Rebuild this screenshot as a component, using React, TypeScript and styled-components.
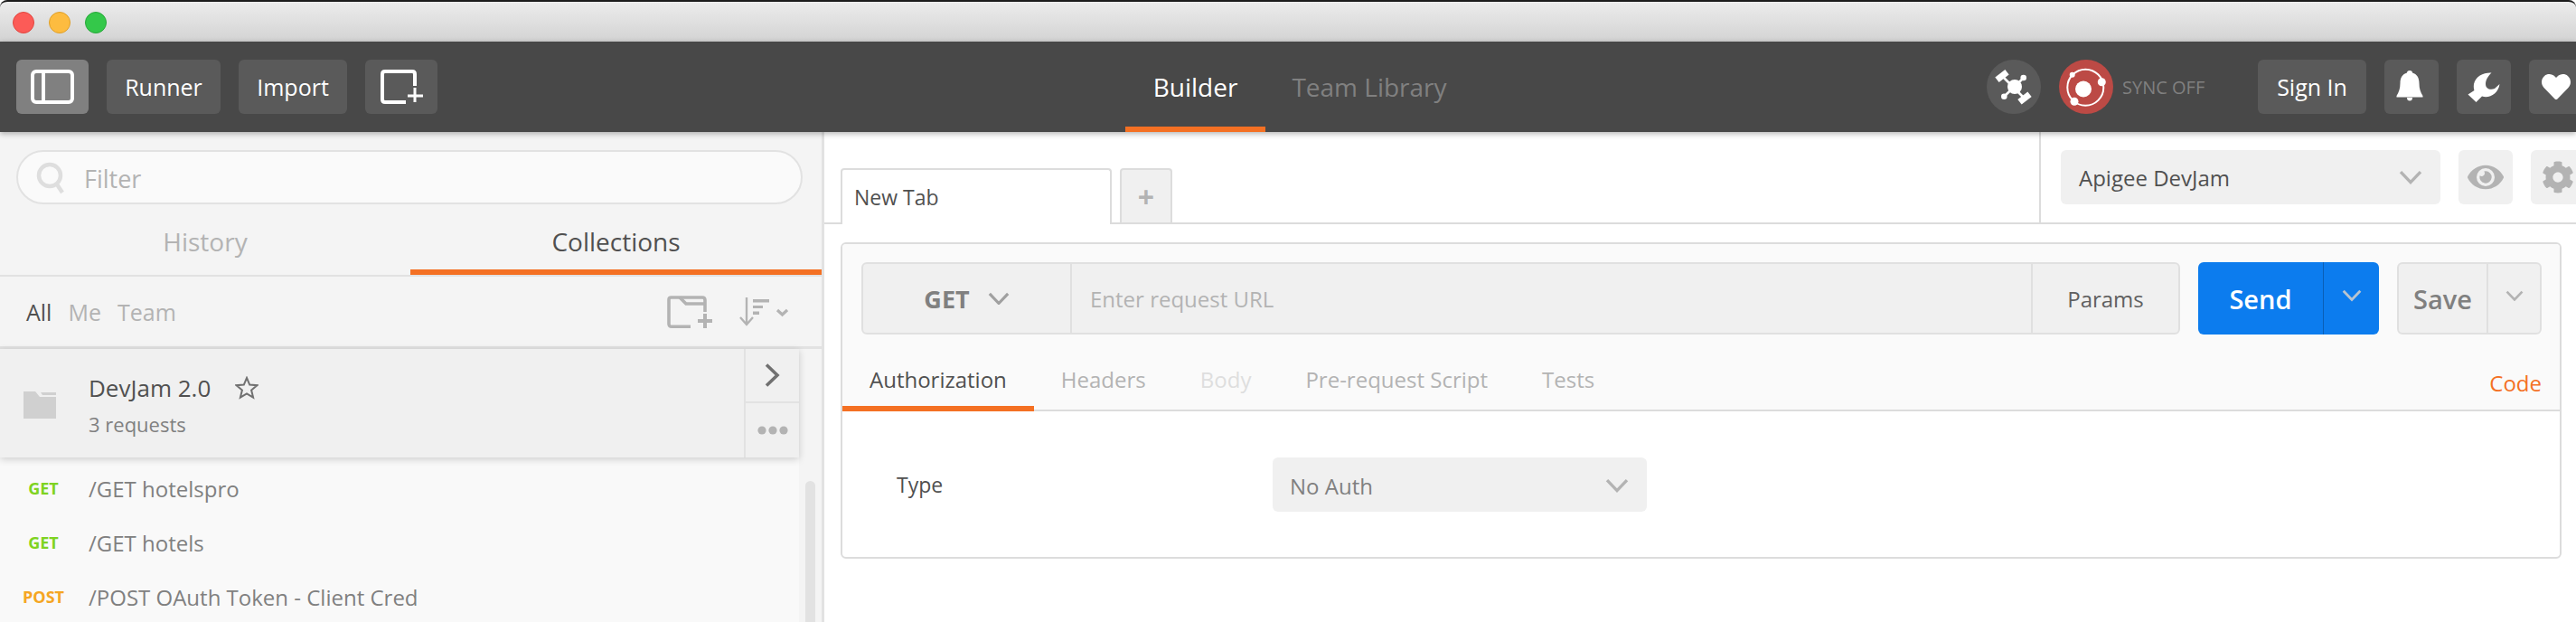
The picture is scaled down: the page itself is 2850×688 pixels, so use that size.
import { FunctionComponent } from "react";
import styled, { createGlobalStyle } from "styled-components";
import { FaCog, FaEye, FaHeart } from "react-icons/fa";

const GlobalStyle = createGlobalStyle`
    html, body {
        margin: 0;
        padding: 0;
        background: #fff;
        overflow: hidden;
    }

    * {
        box-sizing: border-box;
    }

    body {
        font-family: "Open Sans", "Liberation Sans", sans-serif;
    }
`;

const Page = styled.div`
    width: 2850px;
    height: 688px;
    overflow: hidden;
    display: flex;
    flex-direction: column;
`;

const TitleBar = styled.div`
    height: 46px;
    flex: none;
    display: flex;
    align-items: center;
    gap: 16px;
    padding: 2px 0 0 14px;
    border-top: 2px solid #1c1c1c;
    border-radius: 8px 8px 0 0;
    background: linear-gradient(#ececec, #d3d3d3);
`;

const Light = styled.span<{ $fill: string; $edge: string }>`
    width: 24px;
    height: 24px;
    border-radius: 50%;
    background: ${({ $fill }) => $fill};
    border: 1px solid ${({ $edge }) => $edge};
`;

const Toolbar = styled.div`
    height: 100px;
    flex: none;
    display: flex;
    align-items: center;
    padding-left: 18px;
    background: #484848;
    box-shadow: 0 2px 6px rgba(0, 0, 0, 0.3);
    position: relative;
    z-index: 2;
`;

const ToolGroup = styled.div`
    display: flex;
    align-items: center;
    gap: 20px;
    flex: none;
`;

const LeftTools = styled(ToolGroup)`
    width: 1227px;
`;

const ToolButton = styled.div<{ $width: number; $active?: boolean }>`
    width: ${({ $width }) => $width}px;
    height: 60px;
    flex: none;
    display: flex;
    align-items: center;
    justify-content: center;
    border-radius: 6px;
    background: ${({ $active }) => ($active ? "#808080" : "#5a5a5a")};
    color: #fff;
    font-size: 25px;
`;

const BuilderTab = styled.div<{ $active?: boolean; $width: number }>`
    width: ${({ $width }) => $width}px;
    height: 100px;
    flex: none;
    display: flex;
    align-items: center;
    justify-content: center;
    font-size: 28px;
    color: ${({ $active }) => ($active ? "#fff" : "#808080")};
    border-bottom: 6px solid ${({ $active }) => ($active ? "#f47023" : "transparent")};
    padding-top: 6px;
`;

const RightTools = styled(ToolGroup)`
    margin-left: auto;
    margin-right: -8px;
`;

const RoundButton = styled.div<{ $fill: string }>`
    width: 60px;
    height: 60px;
    flex: none;
    border-radius: 50%;
    background: ${({ $fill }) => $fill};
`;

const SyncGroup = styled.div`
    display: flex;
    align-items: center;
    gap: 10px;
    width: 200px;
    flex: none;
`;

const SyncLabel = styled.span`
    font-size: 20px;
    color: #808080;
`;

const Body = styled.div`
    flex: 1;
    display: flex;
    min-height: 0;
`;

const Sidebar = styled.aside`
    width: 912px;
    flex: none;
    display: flex;
    flex-direction: column;
    background: #f4f4f4;
    border-right: 3px solid #e2e2e2;
`;

const FilterBox = styled.div`
    height: 60px;
    flex: none;
    margin: 20px 21px 0 18px;
    display: flex;
    align-items: center;
    gap: 21px;
    padding: 2px 20px 0;
    border: 2px solid #e2e2e2;
    border-radius: 30px;
    background: #fafafa;
    font-size: 27px;
    color: #b3b3b3;
`;

const SideTabs = styled.div`
    height: 80px;
    flex: none;
    display: flex;
    border-bottom: 2px solid #e2e2e2;
`;

const SideTab = styled.div<{ $active?: boolean; $width: number }>`
    width: ${({ $width }) => $width}px;
    flex: none;
    display: flex;
    align-items: center;
    justify-content: center;
    padding-top: 10px;
    font-size: 28px;
    color: ${({ $active }) => ($active ? "#505050" : "#b3b3b3")};
    border-bottom: 6px solid ${({ $active }) => ($active ? "#f47023" : "transparent")};
`;

const FilterRow = styled.div`
    height: 80px;
    flex: none;
    display: flex;
    align-items: center;
    gap: 18px;
    padding: 0 37px 0 29px;
    border-bottom: 3px solid #e2e2e2;
    font-size: 25px;
    color: #b3b3b3;
`;

const FilterOption = styled.span<{ $active?: boolean }>`
    color: ${({ $active }) => ($active ? "#505050" : "#b3b3b3")};
`;

const FilterActions = styled.div`
    margin-left: auto;
    display: flex;
    align-items: center;
    gap: 30px;
`;

const ListArea = styled.div`
    flex: 1;
    display: flex;
    min-height: 0;
`;

const ListColumn = styled.div`
    width: 884px;
    flex: none;
    background: #f9f9f9;
`;

const Gutter = styled.div`
    flex: 1;
    padding: 146px 7px 0;
`;

const ScrollThumb = styled.div`
    height: 100%;
    border-radius: 6px 6px 0 0;
    background: #e2e2e2;
`;

const CollectionRow = styled.div`
    height: 120px;
    display: flex;
    background: #f0f0f0;
    box-shadow: 0 2px 8px rgba(0, 0, 0, 0.18);
    position: relative;
`;

const FolderCell = styled.div`
    width: 98px;
    flex: none;
    display: flex;
    align-items: center;
    padding: 4px 0 0 26px;
`;

const CollectionInfo = styled.div`
    flex: 1;
    display: flex;
    flex-direction: column;
    justify-content: center;
    gap: 7px;
    padding-top: 3px;
`;

const CollectionName = styled.div`
    display: flex;
    align-items: center;
    gap: 27px;
    font-size: 26px;
    color: #505050;
`;

const CollectionCount = styled.div`
    font-size: 22px;
    color: #808080;
`;

const CollectionActions = styled.div`
    width: 61px;
    flex: none;
    display: flex;
    flex-direction: column;
    border-left: 2px solid #e2e2e2;
`;

const CollectionAction = styled.div<{ $grow?: boolean }>`
    flex: ${({ $grow }) => ($grow ? 1 : "none")};
    height: ${({ $grow }) => ($grow ? "auto" : "60px")};
    display: flex;
    align-items: center;
    justify-content: center;
    border-bottom: ${({ $grow }) => ($grow ? "none" : "2px solid #e2e2e2")};
`;

const RequestList = styled.div`
    padding-top: 4px;
`;

const RequestRow = styled.div`
    height: 60px;
    display: flex;
    align-items: center;
`;

const MethodLabel = styled.span<{ $color: string }>`
    width: 98px;
    flex: none;
    padding-right: 2px;
    text-align: center;
    font-size: 18px;
    font-weight: 700;
    color: ${({ $color }) => $color};
`;

const RequestName = styled.span`
    font-size: 24px;
    color: #808080;
`;

const Main = styled.main`
    flex: 1;
    min-width: 0;
    display: flex;
    flex-direction: column;
`;

const TabStrip = styled.div`
    height: 102px;
    flex: none;
    display: flex;
    border-bottom: 2px solid #dcdcdc;
`;

const TabArea = styled.div`
    width: 1344px;
    flex: none;
    display: flex;
    align-items: flex-end;
    padding-left: 18px;
    gap: 9px;
`;

const EditorTab = styled.div`
    width: 300px;
    height: 62px;
    flex: none;
    display: flex;
    align-items: center;
    padding-left: 13px;
    margin-bottom: -2px;
    border: 2px solid #dcdcdc;
    border-bottom: none;
    border-radius: 4px 4px 0 0;
    background: #fff;
    font-size: 23px;
    color: #505050;
`;

const AddTab = styled.div`
    width: 58px;
    height: 60px;
    flex: none;
    display: flex;
    align-items: center;
    justify-content: center;
    border: 2px solid #dcdcdc;
    border-bottom: none;
    border-radius: 4px 4px 0 0;
    background: #f0f0f0;
    font-size: 32px;
    font-weight: 700;
    color: #b3b3b3;
`;

const EnvArea = styled.div`
    flex: 1;
    display: flex;
    gap: 20px;
    padding: 20px 0 0 22px;
    border-left: 2px solid #dcdcdc;
`;

const EnvSelect = styled.div`
    width: 420px;
    height: 60px;
    flex: none;
    display: flex;
    align-items: center;
    justify-content: space-between;
    padding: 0 20px;
    border-radius: 6px;
    background: #f0f0f0;
    font-size: 24px;
    color: #505050;
`;

const EnvButton = styled.div`
    width: 60px;
    height: 60px;
    flex: none;
    display: flex;
    align-items: center;
    justify-content: center;
    border-radius: 6px;
    background: #f0f0f0;
`;

const Builder = styled.section`
    width: 1904px;
    height: 350px;
    flex: none;
    margin: 20px 0 0 18px;
    border: 2px solid #dcdcdc;
    border-radius: 6px;
    background: #fff;
`;

const BuilderTop = styled.div`
    background: #fafafa;
    border-radius: 4px 4px 0 0;
`;

const UrlRow = styled.div`
    display: flex;
    padding: 20px 20px 0 21px;
    height: 100px;
`;

const UrlGroup = styled.div`
    width: 1459px;
    height: 80px;
    flex: none;
    display: flex;
    align-items: stretch;
    border: 2px solid #e0e0e0;
    border-radius: 6px;
    background: #f0f0f0;
`;

const MethodSelect = styled.div`
    width: 231px;
    flex: none;
    display: flex;
    align-items: center;
    justify-content: center;
    gap: 20px;
    border-right: 2px solid #e0e0e0;
    font-size: 27px;
    font-weight: 700;
    color: #808080;
`;

const UrlInput = styled.div`
    flex: 1;
    display: flex;
    align-items: center;
    padding-left: 20px;
    font-size: 24px;
    color: #b3b3b3;
`;

const ParamsButton = styled.div`
    width: 163px;
    flex: none;
    display: flex;
    align-items: center;
    justify-content: center;
    border-left: 2px solid #e0e0e0;
    font-size: 24px;
    color: #606060;
`;

const SendGroup = styled.div`
    width: 200px;
    height: 80px;
    flex: none;
    margin-left: 20px;
    display: flex;
    border-radius: 6px;
    background: #0c7cee;
    color: #fff;
    font-size: 29px;
    font-weight: 600;
`;

const SendLabel = styled.div`
    width: 139px;
    flex: none;
    display: flex;
    align-items: center;
    justify-content: center;
    border-right: 1px solid #0a5fb5;
`;

const SplitCaret = styled.div`
    flex: 1;
    display: flex;
    align-items: center;
    justify-content: center;
    padding-bottom: 6px;
`;

const SaveGroup = styled.div`
    width: 160px;
    height: 80px;
    flex: none;
    margin-left: 20px;
    display: flex;
    border: 2px solid #e0e0e0;
    border-radius: 6px;
    background: #f0f0f0;
    color: #808080;
    font-size: 29px;
    font-weight: 600;
`;

const SaveLabel = styled.div`
    width: 99px;
    flex: none;
    display: flex;
    align-items: center;
    justify-content: center;
    border-right: 2px solid #e0e0e0;
`;

const RequestTabs = styled.div`
    height: 85px;
    display: flex;
    align-items: stretch;
    padding-right: 20px;
    border-bottom: 2px solid #dcdcdc;
    font-size: 24px;
`;

const RequestTab = styled.div<{ $color: string; $active?: boolean }>`
    flex: none;
    display: flex;
    align-items: center;
    justify-content: center;
    padding: 20px 30px 0;
    margin-bottom: -2px;
    color: ${({ $color }) => $color};
    border-bottom: 6px solid ${({ $active }) => ($active ? "#f47023" : "transparent")};
`;

const CodeLink = styled.div`
    margin-left: auto;
    display: flex;
    align-items: center;
    padding-top: 24px;
    color: #f47023;
`;

const AuthRow = styled.div`
    display: flex;
    align-items: center;
    padding: 51px 0 0 60px;
`;

const AuthLabel = styled.div`
    width: 416px;
    flex: none;
    font-size: 23px;
    color: #505050;
`;

const AuthSelect = styled.div`
    width: 414px;
    height: 60px;
    flex: none;
    display: flex;
    align-items: center;
    justify-content: space-between;
    padding: 2px 20px 0 19px;
    border-radius: 6px;
    background: #f0f0f0;
    font-size: 24px;
    color: #808080;
`;

const Caret: FunctionComponent<{ size: number; color: string }> = ({ size, color }) => (
    <svg width={size} height={size * 0.62} viewBox="0 0 26 16" fill="none">
        <path d="M2 2 L13 13.5 L24 2" stroke={color} strokeWidth="3.4" />
    </svg>
);

const SidebarIcon = () => (
    <svg width="48" height="38" viewBox="0 0 48 38" fill="none" stroke="#fff" strokeWidth="4">
        <rect x="2" y="2" width="44" height="34" rx="4" />
        <path d="M14 2 V36" />
    </svg>
);

const NewTabIcon = () => (
    <svg width="47" height="38" viewBox="0 0 47 38" fill="none" stroke="#fff" strokeWidth="4">
        <path d="M28 36 H5 Q2 36 2 33 V5 Q2 2 5 2 H35 Q38 2 38 5 V18" />
        <path d="M38 20 V36 M30 29 H47" strokeWidth="3" />
    </svg>
);

const SatelliteIcon = () => (
    <svg width="60" height="60" viewBox="0 0 60 60" fill="#fff">
        <path d="M17 18 L42 43 M41 20 L19 41" stroke="#fff" strokeWidth="2.6" />
        <circle cx="31" cy="30" r="8" />
        <rect x="10" y="14.5" width="14" height="7" transform="rotate(-38 17 18)" />
        <rect x="35" y="39" width="14" height="7" transform="rotate(-38 42 42.5)" />
        <circle cx="40.7" cy="20" r="3.3" />
        <circle cx="19.3" cy="40.7" r="3.3" />
    </svg>
);

const SyncIcon = () => (
    <svg width="60" height="60" viewBox="0 0 60 60" fill="#fff">
        <circle cx="29.3" cy="30.7" r="20" fill="none" stroke="#fff" strokeWidth="2" />
        <circle cx="27" cy="32.5" r="9" />
        <circle cx="14.7" cy="16.7" r="3" />
        <circle cx="47.3" cy="24.7" r="4.5" />
        <circle cx="17" cy="46.3" r="4.5" />
    </svg>
);

const BellIcon = () => (
    <svg width="60" height="60" viewBox="0 0 60 60" fill="#fff">
        <path d="M28 12 C30 12 31 13 31 14.5 C36 16 38.5 20 38.5 26 C38.5 32 40 36 42.5 40 L42.5 41.5 H13.5 V40 C16 36 17.5 32 17.5 26 C17.5 20 20 16 25 14.5 C25 13 26 12 28 12 Z" />
        <path d="M25 42 H31 A3 3.5 0 0 1 25 42 Z" />
    </svg>
);

const WrenchIcon = () => (
    <svg width="60" height="60" viewBox="0 0 60 60" fill="#fff">
        <path d="M38.5 14.5 C30 14 21 18 19 27 C18.5 30 19 33 19.5 34 L12.5 38.5 L21.5 47 L28 40.5 C36 43 46 38 47.5 27 L42 32 C37 34 32 32 32 27 C32 22 35 18 38.5 14.5 Z" />
    </svg>
);

const SearchIcon = () => (
    <svg width="32" height="36" viewBox="0 0 32 36" fill="none" stroke="#dedede" strokeWidth="4.5">
        <circle cx="15" cy="15" r="12" />
        <path d="M23 25 L29 34" />
    </svg>
);

const NewFolderIcon = () => (
    <svg width="50" height="36" viewBox="0 0 50 36" fill="none" stroke="#b3b3b3" strokeWidth="3.6">
        <path d="M26 34.2 H5 Q2 34.2 2 31.2 V4.5 Q2 2 4.5 2 H39 Q42 2 42 5 V18" />
        <path d="M14 2 L21 9 H42" />
        <path d="M42 20 V36 M34 28 H50" strokeWidth="4" />
    </svg>
);

const SortIcon = () => (
    <svg width="54" height="32" viewBox="0 0 54 32" fill="#b3b3b3" stroke="#b3b3b3">
        <path d="M8 0 V30 M1 22 L8 30 L15 22" fill="none" strokeWidth="2.4" />
        <rect x="15" y="2" width="18" height="3.5" stroke="none" />
        <rect x="15" y="9" width="11" height="3" stroke="none" />
        <rect x="15" y="15.5" width="7" height="3.5" stroke="none" />
        <path d="M42 14 L47.5 19 L53 14" fill="none" strokeWidth="3.2" />
    </svg>
);

const FolderIcon = () => (
    <svg width="36" height="30" viewBox="0 0 36 30" fill="#d0d0d0">
        <path d="M0 0 H13 L18 6 H36 V30 H0 Z M19 1 H36 V4 H21 Z" fillRule="evenodd" />
    </svg>
);

const StarIcon = () => (
    <svg width="26" height="26" viewBox="0 0 26 26" fill="none" stroke="#707070" strokeWidth="2">
        <path d="M13 2 L16.2 9.6 L24.4 10.2 L18.1 15.6 L20.1 23.6 L13 19.3 L5.9 23.6 L7.9 15.6 L1.6 10.2 L9.8 9.6 Z" />
    </svg>
);

const ChevronRight = () => (
    <svg width="18" height="26" viewBox="0 0 18 26" fill="none" stroke="#707070" strokeWidth="3.6">
        <path d="M2 1.5 L14 13 L2 24.5" />
    </svg>
);

const DotsIcon = () => (
    <svg width="34" height="10" viewBox="0 0 34 10" fill="#b3b3b3">
        <circle cx="5" cy="5" r="4.6" />
        <circle cx="17" cy="5" r="4.6" />
        <circle cx="29" cy="5" r="4.6" />
    </svg>
);

const requests = [
    { method: "GET", color: "#7ed321", name: "/GET hotelspro" },
    { method: "GET", color: "#7ed321", name: "/GET hotels" },
    { method: "POST", color: "#f5a623", name: "/POST OAuth Token - Client Cred" },
];

const App: FunctionComponent = () => {
    return (
        <Page>
            <GlobalStyle />
            <TitleBar>
                <Light $fill="#fc5b57" $edge="#e2463f" />
                <Light $fill="#fdbc40" $edge="#e0a028" />
                <Light $fill="#34c84a" $edge="#28a83a" />
            </TitleBar>
            <Toolbar>
                <LeftTools>
                    <ToolButton $width={80} $active>
                        <SidebarIcon />
                    </ToolButton>
                    <ToolButton $width={126}>Runner</ToolButton>
                    <ToolButton $width={120}>Import</ToolButton>
                    <ToolButton $width={80}>
                        <NewTabIcon />
                    </ToolButton>
                </LeftTools>
                <BuilderTab $width={155} $active>
                    Builder
                </BuilderTab>
                <BuilderTab $width={230}>Team Library</BuilderTab>
                <RightTools>
                    <RoundButton $fill="#5a5a5a">
                        <SatelliteIcon />
                    </RoundButton>
                    <SyncGroup>
                        <RoundButton $fill="#bc4a45">
                            <SyncIcon />
                        </RoundButton>
                        <SyncLabel>SYNC OFF</SyncLabel>
                    </SyncGroup>
                    <ToolButton $width={120}>Sign In</ToolButton>
                    <ToolButton $width={60}>
                        <BellIcon />
                    </ToolButton>
                    <ToolButton $width={60}>
                        <WrenchIcon />
                    </ToolButton>
                    <ToolButton $width={60}>
                        <FaHeart size={32} />
                    </ToolButton>
                </RightTools>
            </Toolbar>
            <Body>
                <Sidebar>
                    <FilterBox>
                        <SearchIcon />
                        Filter
                    </FilterBox>
                    <SideTabs>
                        <SideTab $width={454}>History</SideTab>
                        <SideTab $width={455} $active>
                            Collections
                        </SideTab>
                    </SideTabs>
                    <FilterRow>
                        <FilterOption $active>All</FilterOption>
                        <FilterOption>Me</FilterOption>
                        <FilterOption>Team</FilterOption>
                        <FilterActions>
                            <NewFolderIcon />
                            <SortIcon />
                        </FilterActions>
                    </FilterRow>
                    <ListArea>
                        <ListColumn>
                            <CollectionRow>
                                <FolderCell>
                                    <FolderIcon />
                                </FolderCell>
                                <CollectionInfo>
                                    <CollectionName>
                                        DevJam 2.0
                                        <StarIcon />
                                    </CollectionName>
                                    <CollectionCount>3 requests</CollectionCount>
                                </CollectionInfo>
                                <CollectionActions>
                                    <CollectionAction>
                                        <ChevronRight />
                                    </CollectionAction>
                                    <CollectionAction $grow>
                                        <DotsIcon />
                                    </CollectionAction>
                                </CollectionActions>
                            </CollectionRow>
                            <RequestList>
                                {requests.map((request) => (
                                    <RequestRow key={request.name}>
                                        <MethodLabel $color={request.color}>{request.method}</MethodLabel>
                                        <RequestName>{request.name}</RequestName>
                                    </RequestRow>
                                ))}
                            </RequestList>
                        </ListColumn>
                        <Gutter>
                            <ScrollThumb />
                        </Gutter>
                    </ListArea>
                </Sidebar>
                <Main>
                    <TabStrip>
                        <TabArea>
                            <EditorTab>New Tab</EditorTab>
                            <AddTab>+</AddTab>
                        </TabArea>
                        <EnvArea>
                            <EnvSelect>
                                Apigee DevJam
                                <Caret size={26} color="#b3b3b3" />
                            </EnvSelect>
                            <EnvButton>
                                <FaEye size={40} color="#b3b3b3" />
                            </EnvButton>
                            <EnvButton>
                                <FaCog size={36} color="#b3b3b3" />
                            </EnvButton>
                        </EnvArea>
                    </TabStrip>
                    <Builder>
                        <BuilderTop>
                            <UrlRow>
                                <UrlGroup>
                                    <MethodSelect>
                                        GET
                                        <Caret size={24} color="#a0a0a0" />
                                    </MethodSelect>
                                    <UrlInput>Enter request URL</UrlInput>
                                    <ParamsButton>Params</ParamsButton>
                                </UrlGroup>
                                <SendGroup>
                                    <SendLabel>Send</SendLabel>
                                    <SplitCaret>
                                        <Caret size={22} color="#b8c4d0" />
                                    </SplitCaret>
                                </SendGroup>
                                <SaveGroup>
                                    <SaveLabel>Save</SaveLabel>
                                    <SplitCaret>
                                        <Caret size={20} color="#b3b3b3" />
                                    </SplitCaret>
                                </SaveGroup>
                            </UrlRow>
                            <RequestTabs>
                                <RequestTab $color="#505050" $active>
                                    Authorization
                                </RequestTab>
                                <RequestTab $color="#b3b3b3">Headers</RequestTab>
                                <RequestTab $color="#dedede">Body</RequestTab>
                                <RequestTab $color="#b3b3b3">Pre-request Script</RequestTab>
                                <RequestTab $color="#b3b3b3">Tests</RequestTab>
                                <CodeLink>Code</CodeLink>
                            </RequestTabs>
                        </BuilderTop>
                        <AuthRow>
                            <AuthLabel>Type</AuthLabel>
                            <AuthSelect>
                                No Auth
                                <Caret size={26} color="#b3b3b3" />
                            </AuthSelect>
                        </AuthRow>
                    </Builder>
                </Main>
            </Body>
        </Page>
    );
};

export default App;
